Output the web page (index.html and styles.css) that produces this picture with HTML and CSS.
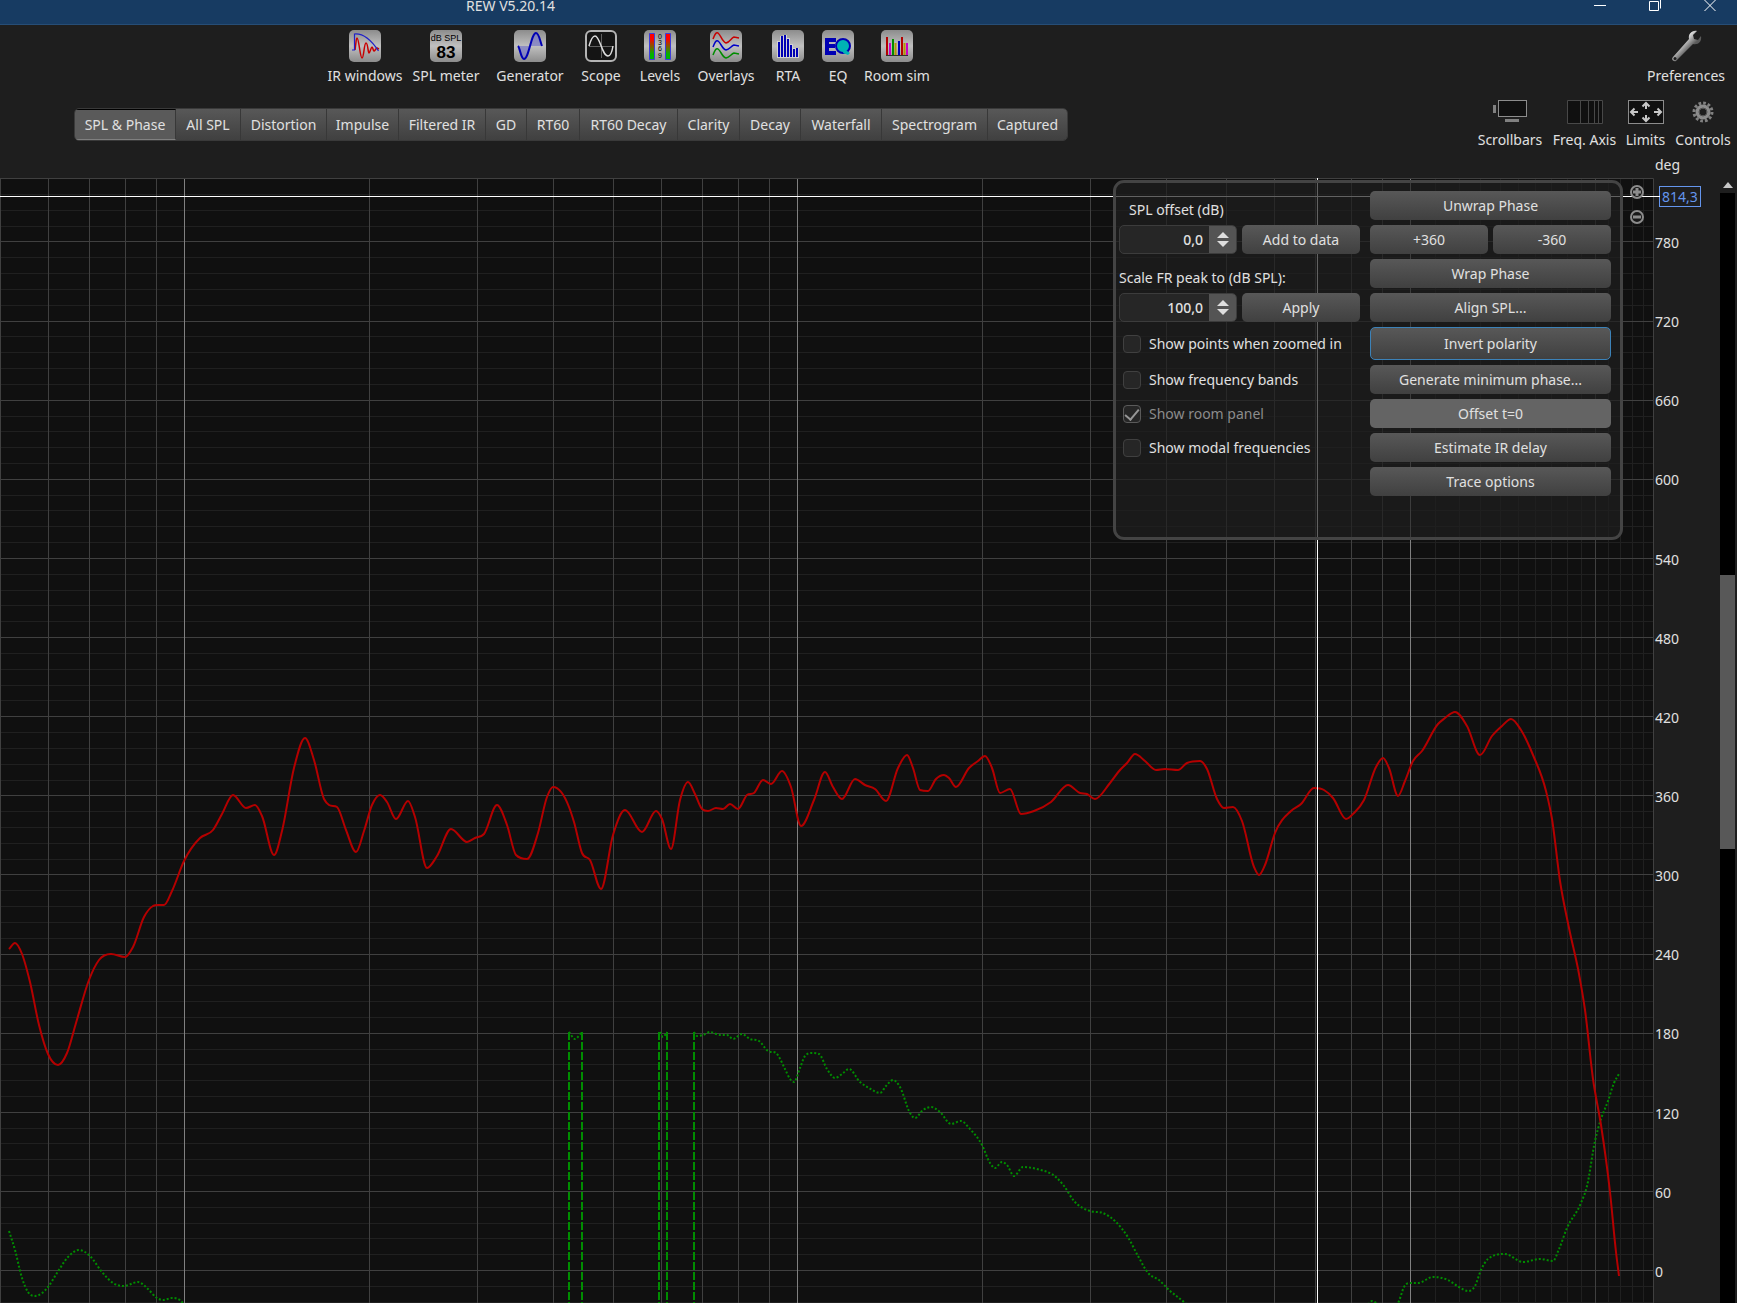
FILE: index.html
```html
<!DOCTYPE html>
<html lang="en">

<head>
    <meta charset="UTF-8">
    <meta name="viewport" content="width=device-width, initial-scale=1.0">
    <title>REW V5.20.14</title>
    <link rel="stylesheet" href="styles.css">
</head>

<body>
    <!-- shared gradients for the toolbar icons -->
    <svg class="defs" width="0" height="0" aria-hidden="true">
        <defs>
            <linearGradient id="tile" x1="0" y1="0" x2="0" y2="1">
                <stop offset="0" stop-color="#8c8c8c" />
                <stop offset="0.5" stop-color="#c0c0c0" />
                <stop offset="1" stop-color="#8c8c8c" />
            </linearGradient>
            <linearGradient id="meter" x1="0" y1="0" x2="0" y2="1">
                <stop offset="0.2" stop-color="#ff0000" />
                <stop offset="0.8" stop-color="#00b400" />
            </linearGradient>
            <linearGradient id="metal" x1="0" y1="0" x2="1" y2="1">
                <stop offset="0.35" stop-color="#e6e6e6" />
                <stop offset="0.6" stop-color="#5a5a5a" />
            </linearGradient>
        </defs>
    </svg>

    <header class="titlebar">
        <h1>REW V5.20.14</h1>
        <div class="window-buttons">
            <button aria-label="Minimize"><svg width="14" height="14"><path d="M1 8.500h12" /></svg></button>
            <button aria-label="Restore"><svg width="14" height="14"><path d="M1.500 4.500h9v9h-9zM4 2.500h8.500v9" /></svg></button>
            <button aria-label="Close"><svg width="14" height="14"><path d="M1 2.500l12 12M13 2.500l-12 12" /></svg></button>
        </div>
    </header>

    <div class="toolbar">
        <nav class="tools">
            <button class="tool">
                <svg width="32" height="32">
                    <rect class="tile" width="32" height="32" rx="5" />
                    <path d="M6 20C7 14 7 8 8 8c2 0 3 20 5 20s2-15 4-15 2 10 3 10 2-6 3-6 1 4 2 4 2-3 3-3l2 1" fill="none" stroke="#c80000" stroke-width="1.500" />
                    <path d="M3 20h2.500V4c10-1 18 8 24 17" fill="none" stroke="#2020c8" stroke-width="1.200" />
                </svg>
                IR windows
            </button>
            <button class="tool">
                <svg width="32" height="32">
                    <rect class="tile" width="32" height="32" rx="5" />
                    <text x="16" y="11" class="icon-small">dB SPL</text>
                    <text x="16" y="28" class="icon-big">83</text>
                </svg>
                SPL meter
            </button>
            <button class="tool">
                <svg width="32" height="32">
                    <rect class="tile" width="32" height="32" rx="5" />
                    <path d="M4 16h12l-3 9-4 4-3-5zM16 16l4-11 3-2 5 13z" fill="#7878c8" opacity=".7" />
                    <path d="M4 16c2 2 3 13 6 13 5 0 7-26 12-26 3 0 4 8 6 13" fill="none" stroke="#0000b4" stroke-width="2" />
                </svg>
                Generator
            </button>
            <button class="tool">
                <svg width="32" height="32">
                    <rect x="1" y="1" width="30" height="30" rx="5" fill="#141414" stroke="#b4b4b4" stroke-width="2" />
                    <path d="M16.500 4v24M4 16.500h24" stroke="#606060" />
                    <path d="M4 16C6 9 8 6 10 6c5 0 7 20 13 20 2 0 4-4 5-10" fill="none" stroke="#dcdcdc" stroke-width="1.500" />
                </svg>
                Scope
            </button>
            <button class="tool">
                <svg width="32" height="32">
                    <rect class="tile" width="32" height="32" rx="5" />
                    <path d="M5.500 3.500h5v26h-5zM21.500 3.500h5v26h-5z" fill="url(#meter)" stroke="#3c3cdc" />
                    <text x="16" y="9" class="icon-tiny">0</text>
                    <text x="16" y="15" class="icon-tiny">3</text>
                    <text x="16" y="21" class="icon-tiny">6</text>
                    <text x="16" y="28" class="icon-tiny">9</text>
                </svg>
                Levels
            </button>
            <button class="tool">
                <svg width="32" height="32" fill="none" stroke-width="1.500">
                    <rect class="tile" width="32" height="32" rx="5" />
                    <path d="M3 9C5 4 6 2 8 3c3 2 4 9 8 10 4-1 5-5 8-6l5 1" stroke="#c80000" />
                    <path d="M3 17c2-5 3-7 5-6 3 2 4 8 8 9 4-1 5-4 8-5l5 1" stroke="#0000c8" />
                    <path d="M3 25c2-5 3-7 5-6 3 2 4 8 8 9 4-1 5-4 8-5l5 1" stroke="#008c00" />
                </svg>
                Overlays
            </button>
            <button class="tool">
                <svg width="32" height="32">
                    <rect class="tile" width="32" height="32" rx="5" />
                    <g stroke="#d2d2d2" stroke-width="4"><path d="M7 11v17M10 6v22M13 5v23M16 8v20M19 14v14M22 18v10M25 18v10" /></g>
                    <path d="M7 12v15M10 6v21M13 5v22M16 9v18M19 15v12M22 19v8M25 18v9" stroke="#0000b4" stroke-width="2" />
                </svg>
                RTA
            </button>
            <button class="tool">
                <svg width="32" height="32">
                    <rect class="tile" width="32" height="32" rx="5" />
                    <path d="M3 8h11v4H7v2h6v4H7v3h7v4H3z" fill="#0000b4" />
                    <circle cx="21" cy="16" r="7" fill="#00b4b4" stroke="#0000b4" stroke-width="2" />
                    <path d="M22 19l6 4-2 2-5-2z" fill="#00b4b4" />
                </svg>
                EQ
            </button>
            <button class="tool">
                <svg width="32" height="32" stroke-width="2">
                    <rect class="tile" width="32" height="32" rx="5" />
                    <path d="M6 7v18M21 7v18" stroke="#b40000" />
                    <path d="M9 13v12M26 13v12" stroke="#c800c8" />
                    <path d="M12 9v16" stroke="#008c00" />
                    <path d="M14.500 13v12M23.500 13v12" stroke="#b49600" />
                    <path d="M18 11v14" stroke="#0000b4" />
                    <path d="M5 25.500h22" stroke="#303030" stroke-width="1" />
                </svg>
                Room sim
            </button>
        </nav>
        <button class="tool">
            <svg width="32" height="32">
                <path d="M3 27l16-18c-1-5 3-9 8-8l-4 4 1 4 4 1 3-4c1 6-3 9-8 8L6 31c-3 1-5-2-3-4z" fill="url(#metal)" />
                <circle cx="5" cy="28.500" r="1.500" fill="#1e1e1e" />
            </svg>
            Preferences
        </button>
    </div>

    <div class="graph-header">
        <nav class="tabs">
            <button class="tab active">SPL &amp; Phase</button>
            <button class="tab">All SPL</button>
            <button class="tab">Distortion</button>
            <button class="tab">Impulse</button>
            <button class="tab">Filtered IR</button>
            <button class="tab">GD</button>
            <button class="tab">RT60</button>
            <button class="tab">RT60 Decay</button>
            <button class="tab">Clarity</button>
            <button class="tab">Decay</button>
            <button class="tab">Waterfall</button>
            <button class="tab">Spectrogram</button>
            <button class="tab">Captured</button>
        </nav>
        <div class="graph-tools">
            <button class="tool">
                <svg width="36" height="25">
                    <rect x="6.500" y="0.500" width="28" height="16" fill="#101010" stroke="#8c8c8c" />
                    <path d="M1 5h3v8H1zM13 19h14v3H13z" fill="#808080" />
                </svg>
                Scrollbars
            </button>
            <button class="tool">
                <svg width="36" height="25">
                    <path d="M0.500 0.500h35v23h-35zM13.500 0v24M21.500 0v24M27.500 0v24M31.500 0v24" fill="#101010" stroke="#484848" />
                </svg>
                Freq. Axis
            </button>
            <button class="tool">
                <svg width="36" height="25" fill="none">
                    <rect x="0.500" y="0.500" width="35" height="23" fill="#101010" stroke="#8c8c8c" />
                    <path d="M18 9V3M14.500 6.500L18 3l3.500 3.500M18 15v6M14.500 17.500L18 21l3.500-3.500M10 12H3M6.500 8.500L3 12l3.500 3.500M26 12h7M29.500 8.500L33 12l-3.500 3.500" stroke="#c8c8c8" stroke-width="2" />
                </svg>
                Limits
            </button>
            <button class="tool">
                <svg width="36" height="25" fill="none">
                    <circle cx="18" cy="12" r="9" stroke="#808080" stroke-width="3" stroke-dasharray="2.700 2" />
                    <circle cx="18" cy="12" r="5.500" stroke="#8c8c8c" stroke-width="4" />
                    <circle cx="18" cy="12" r="4" stroke="#505050" />
                </svg>
                Controls
            </button>
        </div>
    </div>
    <p class="axis-unit">deg</p>

    <main class="graph">
        <div class="plot">
            <svg id="plot" viewBox="0 0 1654 1125" preserveAspectRatio="none"></svg>

            <form class="panel" onsubmit="return false">
                <div class="panel-left">
                    <label class="caption indent" for="offset">SPL offset (dB)</label>
                    <div class="spinner">
                        <input id="offset" type="text" value="0,0">
                        <div class="arrows">
                            <button class="up" aria-label="Increase offset"></button>
                            <button class="down" aria-label="Decrease offset"></button>
                        </div>
                    </div>
                    <button class="btn">Add to data</button>
                    <label class="caption" for="peak">Scale FR peak to (dB SPL):</label>
                    <div class="spinner">
                        <input id="peak" type="text" value="100,0">
                        <div class="arrows">
                            <button class="up" aria-label="Increase peak"></button>
                            <button class="down" aria-label="Decrease peak"></button>
                        </div>
                    </div>
                    <button class="btn">Apply</button>
                    <label class="check"><input type="checkbox">Show points when zoomed in</label>
                    <label class="check"><input type="checkbox">Show frequency bands</label>
                    <label class="check disabled"><input type="checkbox" checked disabled>Show room panel</label>
                    <label class="check"><input type="checkbox">Show modal frequencies</label>
                </div>
                <div class="panel-right">
                    <button class="btn wide">Unwrap Phase</button>
                    <button class="btn">+360</button>
                    <button class="btn">-360</button>
                    <button class="btn wide">Wrap Phase</button>
                    <button class="btn wide">Align SPL...</button>
                    <button class="btn wide focused">Invert polarity</button>
                    <button class="btn wide">Generate minimum phase...</button>
                    <button class="btn wide hover">Offset t=0</button>
                    <button class="btn wide">Estimate IR delay</button>
                    <button class="btn wide">Trace options</button>
                </div>
            </form>

            <div class="zoom-buttons">
                <button aria-label="Zoom in"><svg width="14" height="14"><circle cx="7" cy="7" r="6" /><path d="M7 3v8M3 7h8" stroke-width="3" /></svg></button>
                <button aria-label="Zoom out"><svg width="14" height="14"><circle cx="7" cy="7" r="6" /><path d="M3 7h8" stroke-width="3" /></svg></button>
            </div>
        </div>

        <div class="axis">
            <output class="cursor-value">814,3</output>
            <ul>
                <li>780</li>
                <li>720</li>
                <li>660</li>
                <li>600</li>
                <li>540</li>
                <li>480</li>
                <li>420</li>
                <li>360</li>
                <li>300</li>
                <li>240</li>
                <li>180</li>
                <li>120</li>
                <li>60</li>
                <li>0</li>
            </ul>
        </div>

        <div class="scrollbar">
            <button aria-label="Scroll up"></button>
            <div class="track"><div class="thumb"></div></div>
        </div>
    </main>

    <script src="script.js"></script>
</body>

</html>
```
FILE: styles.css
```css
* {
    box-sizing: border-box;
}

body {
    display: flex;
    flex-direction: column;
    height: 100vh;
    margin: 0;
    overflow: hidden;
    background: #1e1e1e;
    color: #e0e0e0;
    font: 14px/20px "Noto Sans", "Open Sans", sans-serif;
}

button, input {
    margin: 0;
    padding: 0;
    border: 0;
    background: none;
    color: inherit;
    font: inherit;
}

.defs {
    position: absolute;
}

/* title bar */
.titlebar {
    display: flex;
    justify-content: space-between;
    flex: none;
    height: 25px;
    padding: 0 20px 0 466px;
    background: #173b62;
    border-bottom: 1px solid #264d76;
}

h1 {
    margin: 0;
    font-size: 14px;
    font-weight: normal;
    line-height: 12px;
}

.window-buttons {
    display: flex;
    gap: 41px;
    margin-top: -4px;
}

.window-buttons button {
    height: 16px;
    line-height: 0;
}

.window-buttons svg {
    fill: none;
    stroke: #fff;
}

/* toolbar */
.toolbar {
    display: flex;
    justify-content: space-between;
    flex: none;
    height: 75px;
    padding: 5px 12px 0 324px;
}

.tools {
    display: grid;
    grid-template-columns: 82px 80px 88px 54px 64px 68px 56px 44px 74px;
}

.tool {
    display: flex;
    flex-direction: column;
    align-items: center;
    gap: 4px;
    height: max-content;
    line-height: 20px;
    white-space: nowrap;
}

.tile {
    fill: url(#tile);
}

.icon-small, .icon-big, .icon-tiny {
    font-family: "Liberation Sans", Arial, sans-serif;
    text-anchor: middle;
    fill: #000;
}

.icon-small {
    font-size: 9px;
}

.icon-big {
    font-size: 17px;
    font-weight: bold;
}

.icon-tiny {
    font-size: 7px;
}

/* tabs */
.graph-header {
    display: flex;
    justify-content: space-between;
    align-items: flex-start;
    flex: none;
    height: 55px;
    padding-left: 74px;
}

.tabs {
    display: grid;
    grid-template-columns: 101px 65px 86px 72px 87px 41px 53px 98px 62px 61px 81px 106px 79px;
    margin-top: 8px;
    overflow: hidden;
    border: 1px solid #3a3a3a;
    border-radius: 5px;
}

.tab {
    height: 31px;
    border-right: 1px solid #383838;
    background: linear-gradient(#585858, #404040);
    white-space: nowrap;
}

.tab:last-child {
    border-right: 0;
}

.tab.active {
    background: #5a5a5a;
    border-top: 1px solid #000;
    border-bottom: 1px solid #808080;
}

.graph-tools {
    display: grid;
    grid-template-columns: 74px 75px 47px 68px;
}

.graph-tools .tool {
    gap: 5px;
}

.axis-unit {
    flex: none;
    align-self: flex-end;
    width: 82px;
    height: 23px;
    margin: 0;
}

/* graph */
.graph {
    display: flex;
    flex: 1;
    min-height: 0;
}

.plot {
    position: relative;
    flex: 1;
    min-width: 0;
    background: #101010;
}

.plot > svg {
    display: block;
    width: 100%;
    height: 100%;
    fill: none;
}

.minor {
    stroke: #202020;
}

.major {
    stroke: #404040;
}

.decade {
    stroke: #808080;
}

.cursor {
    stroke: #fff;
}

.spl {
    stroke: #b40000;
    stroke-width: 2;
}

.phase {
    stroke: #008c00;
    stroke-width: 2;
    stroke-dasharray: 2 2;
}

.phase-wrap {
    stroke: #008c00;
    stroke-width: 2;
    stroke-dasharray: 8 2;
}

/* controls panel */
.panel {
    position: absolute;
    top: 2px;
    right: 31px;
    display: flex;
    gap: 10px;
    padding: 8px 9px 41px 3px;
    border: 3px solid #444;
    border-radius: 11px;
    background: rgba(32, 32, 32, 0.7);
}

.panel-left, .panel-right {
    display: grid;
    grid-template-rows: 29px 29px 29px 29px 33px 29px 29px 29px 29px;
    gap: 5px;
}

.panel-left {
    grid-template-columns: 118px 118px;
}

.panel-right {
    grid-template-columns: 118px 118px;
}

.wide, .caption, .check {
    grid-column: span 2;
}

.caption {
    align-self: end;
}

.indent {
    padding-left: 10px;
}

.btn {
    border-radius: 5px;
    background: linear-gradient(#585858, #404040);
    white-space: nowrap;
}

.btn.focused {
    border: 1px solid #3c82b8;
}

.btn.hover {
    background: #646464;
}

.spinner {
    display: flex;
    overflow: hidden;
    border: 1px solid #3c3c3c;
    border-radius: 5px;
    background: #262626;
}

.spinner input {
    flex: 1;
    min-width: 0;
    padding-right: 6px;
    text-align: right;
    font-weight: 500;
}

.arrows {
    display: flex;
    flex-direction: column;
    justify-content: center;
    align-items: center;
    gap: 3px;
    width: 27px;
    background: #545454;
}

.arrows button {
    border: solid transparent;
    border-width: 0 6px;
}

.arrows .up {
    border-bottom: 6px solid #dedede;
}

.arrows .down {
    border-top: 6px solid #dedede;
}

.check {
    display: flex;
    align-items: center;
    gap: 8px;
    padding-left: 4px;
    white-space: nowrap;
}

.check input {
    display: grid;
    place-items: center;
    width: 18px;
    height: 18px;
    border: 1px solid #404040;
    border-radius: 4px;
    background: #262626;
    appearance: none;
}

.check input:checked {
    border-color: #5a5a5a;
}

.check input:checked::after {
    content: "";
    width: 6px;
    height: 12px;
    border: solid #969696;
    border-width: 0 2px 2px 0;
    transform: translateY(-1px) rotate(40deg);
}

.disabled {
    color: #8c8c8c;
}

.zoom-buttons {
    position: absolute;
    top: 7px;
    right: 10px;
    display: flex;
    flex-direction: column;
    gap: 11px;
}

.zoom-buttons button {
    height: 14px;
    line-height: 0;
}

.zoom-buttons svg {
    fill: #181818;
    stroke: #8c8c8c;
    stroke-width: 2;
}

/* phase axis */
.axis {
    position: relative;
    width: 66px;
    border-left: 1px solid transparent;
}

.axis ul {
    display: flex;
    flex-direction: column;
    justify-content: space-between;
    height: 100%;
    margin: 0;
    padding: 55px 0 21px;
    list-style: none;
}

.cursor-value {
    position: absolute;
    top: 8px;
    left: 4px;
    padding: 0 2px;
    border: 1px solid #6495ed;
    color: #6495ed;
    line-height: 19px;
}

.cursor-value::before {
    content: "";
    position: absolute;
    top: 9px;
    right: 100%;
    width: 6px;
    height: 1px;
    background: #fff;
}

/* scrollbar */
.scrollbar {
    display: flex;
    flex-direction: column;
    width: 17px;
    padding-right: 2px;
}

.scrollbar button {
    align-self: center;
    margin: 4px 0 5px;
    border: solid transparent;
    border-width: 0 5px;
    border-bottom: 6px solid #c8c8c8;
}

.track {
    display: flex;
    flex-direction: column;
    flex: 1;
    background: #000;
}

/* visible range inside the full phase range */
.track::before {
    content: "";
    flex: 382;
}

.track::after {
    content: "";
    flex: 454;
}

.thumb {
    flex: 274;
    background: #585858;
}
```
FILE: script.js
```js
var plot = document.querySelector('#plot');
var W = 1654;
var H = 1125;
var WRAP_Y = 854;

function add(cls, d) {
    var path = document.createElementNS('http://www.w3.org/2000/svg', 'path');
    path.setAttribute('class', cls);
    path.setAttribute('d', d);
    path.setAttribute('vector-effect', 'non-scaling-stroke');
    plot.appendChild(path);
}

// log frequency axis, 50 Hz at the left edge
function fx(f) {
    return Math.floor(184.6 + 613 * Math.log10(f / 100)) + 0.5;
}

function dy(deg) {
    return Math.floor(1092.6 - deg * 1.3188) + 0.5;
}

function vline(cls, x) {
    add(cls, 'M' + x + ' 0V' + H);
}

function hline(cls, y) {
    add(cls, 'M0 ' + y + 'H' + W);
}

function drawGrid() {
    for (let f = 11000; f <= 24000; f += 1000) {
        vline('minor', fx(f));
    }
    for (let deg = -24; deg < 828; deg += 12) {
        if (deg % 60 != 0) hline('minor', dy(deg));
    }
    for (let deg = 0; deg < 828; deg += 60) {
        hline('major', dy(deg));
    }
    [50, 60, 70, 80, 90, 200, 300, 400, 500, 600, 700, 800, 900,
        2000, 3000, 4000, 5000, 6000, 7000, 8000, 9000, 20000].forEach(f => vline('major', fx(f)));
    [100, 1000, 10000].forEach(f => vline('decade', fx(f) ));
    add('major', 'M0 0.5H1653.5V' + H);
}

// smooth curve through x,y pairs
function curve(cls, p) {
    var d = 'M' + p[0] + ' ' + p[1];
    var n = p.length / 2;
    for (let i = 0; i < n - 1; i++) {
        let a = Math.max(i - 1, 0) * 2, b = i * 2, c = b + 2, e = Math.min(i + 2, n - 1) * 2;
        let s1 = slope(p, a, b, c), s2 = slope(p, b, c, e);
        let h = (p[c] - p[b]) / 3;
        d += 'C' + [p[b] + h, p[b + 1] + s1 * h, p[c] - h, p[c + 1] - s2 * h, p[c], p[c + 1]].map(v => v.toFixed(1)).join(' ');
    }
    add(cls, d);
}

// flat on peaks and dips, otherwise the mean slope, limited so it does not overshoot
function slope(p, a, b, c) {
    if (a == b || b == c) return (p[c + 1] - p[a + 1]) / (p[c] - p[a]);
    var h1 = p[b] - p[a], h2 = p[c] - p[b];
    var m1 = (p[b + 1] - p[a + 1]) / h1, m2 = (p[c + 1] - p[b + 1]) / h2;
    if (m1 * m2 <= 0) return 0;
    var m = (m1 * h2 + m2 * h1) / (h1 + h2);
    return Math.sign(m) * Math.min(Math.abs(m), 2.8 * Math.abs(m1), 2.8 * Math.abs(m2));
}

var spl = [
    9, 771, 15, 765, 22, 776, 30, 804, 39, 847, 48, 876, 58, 887, 67, 875, 76, 845, 89, 802, 99, 782, 111, 776,
    125, 779, 133, 769, 144, 739, 153, 728, 158, 727, 164, 727, 172, 713, 184, 683, 200, 660, 213, 652, 222, 636, 233, 617, 246, 630,
    255, 627, 262, 638, 274, 677, 282, 653, 294, 590, 305, 560, 314, 582, 324, 621, 329, 627, 337, 629, 346, 652,
    356, 674, 364, 653, 372, 627, 380, 617, 387, 624, 396, 641, 408, 623, 415, 639, 427, 690, 437, 678, 451, 651,
    467, 664, 475, 660, 484, 656, 497, 627, 507, 647, 516, 677, 527, 681, 538, 655, 547, 619, 553, 609, 569, 629,
    574, 644, 582, 675, 590, 682, 601, 711, 613, 657, 625, 632, 642, 654, 656, 633, 662, 641, 671, 671, 680, 622,
    688, 604, 695, 616, 702, 631, 708, 633, 716, 630, 723, 631, 730, 626, 738, 631, 747, 617, 754, 615, 763, 602,
    771, 606, 782, 593, 791, 609, 801, 648, 814, 622, 825, 594, 833, 609, 842, 621, 855, 601, 865, 607, 875, 611,
    886, 623, 898, 590, 907, 577, 913, 590, 920, 612, 928, 613, 936, 601, 944, 597, 949, 600, 956, 609, 969, 590,
    978, 583, 985, 578, 992, 590, 1000, 615, 1010, 611, 1021, 636, 1034, 633, 1051, 624, 1068, 607, 1080, 615,
    1087, 616, 1095, 621, 1110, 605, 1120, 592, 1127, 585, 1135, 576, 1145, 583, 1156, 592, 1165, 591, 1178, 592,
    1187, 585, 1200, 583, 1207, 591, 1217, 621, 1224, 630, 1233, 629, 1242, 643, 1254, 689, 1259, 697, 1265, 687,
    1275, 655, 1291, 633, 1301, 626, 1314, 610, 1324, 612, 1333, 620, 1346, 641, 1354, 635, 1364, 622, 1376, 589,
    1383, 580, 1389, 590, 1398, 618, 1405, 603, 1413, 583, 1422, 573, 1438, 546, 1445, 540, 1455, 534, 1467, 548,
    1480, 577, 1492, 558, 1502, 548, 1511, 541, 1521, 552, 1533, 577, 1546, 613, 1552, 641, 1560, 703, 1569, 750,
    1579, 796, 1585, 832, 1593, 901, 1601, 947, 1610, 1014, 1616, 1074, 1619, 1098
];

var phase = [
    [9, 1053, 15, 1072, 22, 1100, 28, 1114, 35, 1118, 48, 1109, 57, 1095, 68, 1079, 79, 1072, 90, 1078, 102, 1094,
        113, 1105, 124, 1108, 138, 1104, 148, 1111, 157, 1120, 163, 1122, 172, 1120, 181, 1123, 188, 1133],
    [569, 854, 575, 861, 581, 855],
    [660, 854, 663, 859, 667, 854],
    [694, 854, 697, 858, 703, 857, 710, 854, 720, 857, 727, 857, 733, 861, 742, 856, 750, 861, 759, 863, 768, 873,
        776, 875, 785, 891, 790, 901, 794, 904, 800, 890, 805, 878, 812, 875, 819, 876, 827, 891, 835, 900, 842, 896,
        849, 891, 860, 904, 869, 910, 880, 915, 886, 908, 893, 902, 900, 909, 910, 935, 915, 940, 923, 932, 931, 929,
        940, 934, 951, 946, 961, 943, 970, 951, 982, 967, 990, 985, 995, 990, 1002, 984, 1007, 987, 1014, 998,
        1023, 989, 1037, 991, 1057, 1000, 1064, 1008, 1074, 1023, 1090, 1033, 1103, 1035, 1116, 1044, 1129, 1061,
        1138, 1078, 1149, 1096, 1159, 1102, 1169, 1112, 1184, 1124, 1195, 1134],
    [1366, 1130, 1372, 1123, 1380, 1128, 1391, 1134, 1399, 1123, 1404, 1109, 1410, 1105, 1418, 1105, 1433, 1099,
        1448, 1102, 1459, 1109, 1468, 1113, 1475, 1108, 1481, 1092, 1488, 1081, 1505, 1076, 1523, 1084, 1540, 1081,
        1553, 1083, 1559, 1071, 1567, 1050, 1581, 1025, 1587, 1008, 1595, 963, 1600, 944, 1608, 923, 1614, 905,
        1619, 896]
];

drawGrid();
phase.forEach(p => curve('phase', p));
[569, 582, 659, 667, 694].forEach(x => add('phase-wrap', 'M' + x + ' ' + WRAP_Y + 'V' + H));
curve('spl', spl);
vline('cursor', 1317.5);
hline('cursor', 18.5);
```
